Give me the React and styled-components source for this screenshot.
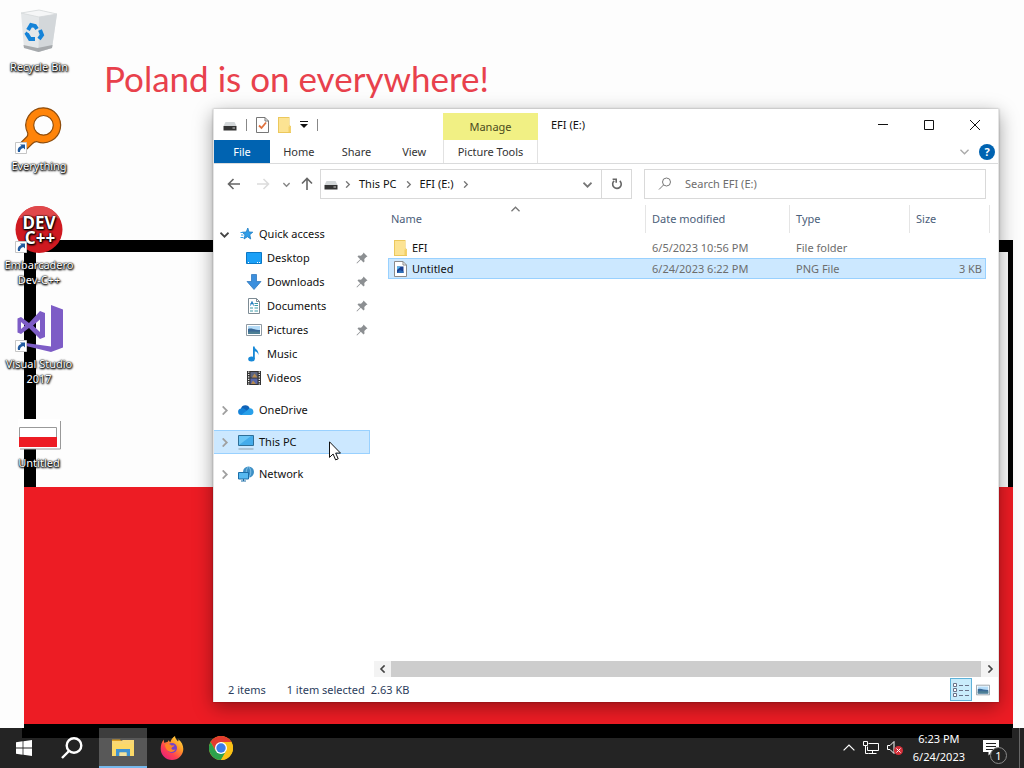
import styled, { createGlobalStyle, css } from 'styled-components';
import { useState } from 'react';

const places = [
  { name: 'Desktop', icon: <DesktopIcon />, pinned: true },
  { name: 'Downloads', icon: <DownloadsIcon />, pinned: true },
  { name: 'Documents', icon: <DocumentsIcon />, pinned: true },
  { name: 'Pictures', icon: <PicturesIcon />, pinned: true },
  { name: 'Music', icon: <MusicIcon /> },
  { name: 'Videos', icon: <VideosIcon /> },
];

const roots = [
  { name: 'OneDrive', icon: <OneDriveIcon /> },
  { name: 'This PC', icon: <ThisPcIcon /> },
  { name: 'Network', icon: <NetworkIcon /> },
];

const files = [
  { name: 'EFI', icon: <FolderIcon />, date: '6/5/2023 10:56 PM', type: 'File folder', size: '' },
  { name: 'Untitled', icon: <ImageFileIcon />, date: '6/24/2023 6:22 PM', type: 'PNG File', size: '3 KB' },
];

const shortcuts = [
  { name: 'Recycle Bin', icon: <RecycleBinIcon /> },
  { name: 'Everything', icon: <EverythingIcon /> },
  { name: 'Embarcadero Dev-C++', icon: <DevCppIcon /> },
  { name: 'Visual Studio 2017', icon: <VisualStudioIcon /> },
  { name: 'Untitled', icon: <FlagFileIcon /> },
];

export default function App() {
  return (
    <>
      <GlobalStyle />
      <Desktop>
        <Flag />
        <Slogan>Poland is on everywhere!</Slogan>
        <Shortcuts>
          {shortcuts.map(item => (
            <Shortcut key={item.name}>
              <span className="picture">{item.icon}</span>
              <span>{item.name}</span>
            </Shortcut>
          ))}
        </Shortcuts>
        <Explorer />
        <Taskbar />
        <Cursor viewBox="0 0 12 20" aria-hidden="true">
          <path d="M.5 .8v15.6l3.6-3.4 2.5 5.9 2.6-1.1-2.5-5.7h4.8z" fill="#fff" stroke="#111" />
        </Cursor>
      </Desktop>
    </>
  );
}

function Explorer() {
  const [place, setPlace] = useState('This PC');
  const [file, setFile] = useState('Untitled');
  const [search, setSearch] = useState('');

  return (
    <Window>
      <TitleBar>
        <QuickTools>
          <DriveIcon />
          <i />
          <button aria-label="Properties">
            <PropertiesIcon />
          </button>
          <button aria-label="New folder">
            <FolderIcon />
          </button>
          <button aria-label="Customize toolbar">
            <svg width="8" height="8" viewBox="0 0 8 8">
              <path d="M0 .5h8" stroke="#111" />
              <path d="M0 3h8L4 7z" fill="#111" />
            </svg>
          </button>
          <i />
        </QuickTools>
        <ContextTitle>Manage</ContextTitle>
        <WindowTitle>EFI (E:)</WindowTitle>
        <WindowButton aria-label="Minimize">
          <svg width="10" height="10" viewBox="0 0 10 10">
            <path d="M0 4.500h10" />
          </svg>
        </WindowButton>
        <WindowButton aria-label="Maximize">
          <svg width="10" height="10" viewBox="0 0 10 10">
            <path d="M.5 .5h9v9h-9z" />
          </svg>
        </WindowButton>
        <WindowButton aria-label="Close">
          <svg width="10" height="10" viewBox="0 0 10 10">
            <path d="M0 0l10 10M10 0L0 10" />
          </svg>
        </WindowButton>
      </TitleBar>

      <Ribbon>
        <Tabs>
          <Tab $file>File</Tab>
          <Tab>Home</Tab>
          <Tab>Share</Tab>
          <Tab>View</Tab>
        </Tabs>
        <ContextTab>Picture Tools</ContextTab>
        <RibbonEnd>
          <button aria-label="Expand ribbon">
            <Chevron dir="down" color="#aaa" size={9} />
          </button>
          <HelpButton aria-label="Help">?</HelpButton>
        </RibbonEnd>
      </Ribbon>

      <NavBar>
        <NavButton $width={28} aria-label="Back">
          <Arrow />
        </NavButton>
        <NavButton $width={30} aria-label="Forward" disabled>
          <Arrow turn={180} color="#dcdcdc" />
        </NavButton>
        <NavButton $width={16} aria-label="Recent locations">
          <Chevron dir="down" color="#888" size={7} bold />
        </NavButton>
        <NavButton $width={26} aria-label="Up">
          <Arrow turn={90} />
        </NavButton>
        <Address>
          <DriveIcon />
          <Chevron color="#777" size={7} bold />
          <button>This PC</button>
          <Chevron color="#777" size={7} bold />
          <button>EFI (E:)</button>
          <Chevron color="#777" size={7} bold />
          <button className="history" aria-label="Previous locations">
            <Chevron dir="down" color="#777" size={9} bold />
          </button>
          <button className="refresh" aria-label="Refresh">
            <svg width="12" height="12" viewBox="0 0 12 12" fill="none" stroke="#666" strokeWidth="1.6">
              <path d="M3.2 2.8A4.3 4.3 0 1 0 8.8 2.9" />
              <path d="M1.6 1.2h3.6v3.6" />
            </svg>
          </button>
        </Address>
        <SearchBox>
          <svg width="14" height="14" viewBox="0 0 14 14" fill="none" stroke="#777">
            <circle cx="8.5" cy="5" r="4" />
            <path d="M5.5 8L1 12.5" />
          </svg>
          <input
            aria-label="Search EFI (E:)"
            placeholder="Search EFI (E:)"
            value={search}
            onChange={e => setSearch(e.target.value)}
          />
        </SearchBox>
      </NavBar>

      <Body>
        <Tree>
          <TreeRow>
            <span className="toggle">
              <Chevron dir="down" color="#444" size={9} bold />
            </span>
            <StarIcon />
            <span>Quick access</span>
          </TreeRow>
          {places.map(item => (
            <TreeRow key={item.name} $child $active={place === item.name} onClick={() => setPlace(item.name)}>
              {item.icon}
              <span>{item.name}</span>
              {item.pinned && <PinIcon />}
            </TreeRow>
          ))}
          {roots.map(item => (
            <TreeRow key={item.name} $root $active={place === item.name} onClick={() => setPlace(item.name)}>
              <span className="toggle">
                <Chevron color="#a0a0a0" size={9} bold />
              </span>
              {item.icon}
              <span>{item.name}</span>
            </TreeRow>
          ))}
        </Tree>

        <Content>
          <FileTable>
            <colgroup>
              <col />
              <col width="144" />
              <col width="120" />
              <col width="76" />
              <col width="4" />
            </colgroup>
            <thead>
              <tr>
                <th>
                  Name
                  <SortMark>
                    <Chevron dir="up" color="#777" size={9} />
                  </SortMark>
                </th>
                <th>Date modified</th>
                <th>Type</th>
                <th className="open">Size</th>
                <td />
              </tr>
            </thead>
            <tbody>
              {files.map(item => (
                <FileRow key={item.name} $active={file === item.name} onClick={() => setFile(item.name)}>
                  <td>
                    <FileName>
                      {item.icon}
                      {item.name}
                    </FileName>
                  </td>
                  <td>{item.date}</td>
                  <td>{item.type}</td>
                  <td className="size">{item.size}</td>
                </FileRow>
              ))}
            </tbody>
          </FileTable>
          <ScrollBar>
            <button aria-label="Scroll left">
              <Chevron dir="left" color="#444" size={8} bold />
            </button>
            <div />
            <button aria-label="Scroll right">
              <Chevron color="#444" size={8} bold />
            </button>
          </ScrollBar>
        </Content>
      </Body>

      <StatusBar>
        <span>2 items</span>
        <span>1 item selected</span>
        <span className="bytes">2.63 KB</span>
        <ViewButton $active aria-label="Details view">
          <svg width="16" height="14" viewBox="0 0 16 14" fill="none" stroke="#6a7288">
            <path d="M.5 .5h3v3h-3zM.5 5.500h3v3h-3zM.5 10.500h3v3h-3z" fill="#fff" />
            <path d="M6 2.500h4M12 2.500h4M6 7.500h4M12 7.500h4M6 12.500h4M12 12.500h4" />
          </svg>
        </ViewButton>
        <ViewButton aria-label="Large icons view">
          <PicturesIcon width={14} />
        </ViewButton>
      </StatusBar>
    </Window>
  );
}

function Taskbar() {
  return (
    <TaskBar>
      <TaskButton aria-label="Start">
        <svg width="16" height="16" viewBox="0 0 16 16" fill="#fff">
          <path d="M0 2.2l6.6-.9v6.2H0zM7.4 1.2L16 0v7.5H7.4zM0 8.4h6.6v6.3L0 13.8zM7.4 8.4H16V16l-8.6-1.2z" />
        </svg>
      </TaskButton>
      <TaskButton aria-label="Search">
        <svg width="22" height="22" viewBox="0 0 22 22" fill="none" stroke="#fff" strokeWidth="2.4">
          <circle cx="13" cy="8.5" r="7.3" />
          <path d="M8 14l-7 7" />
        </svg>
      </TaskButton>
      <Apps>
        <TaskButton $active aria-label="File Explorer">
          <svg width="22" height="20" viewBox="0 0 22 20">
            <path d="M0 1.500h8l2 2H0z" fill="#d99b1c" />
            <path d="M0 3h9l2-1h11v16H0z" fill="#f8d775" />
            <path d="M0 6h22v12H0z" fill="#fbd968" />
            <path d="M4 11h14v7h-3.500v-3.500h-7V18H4z" fill="#3f93d2" />
            <path d="M7.500 14.500h7V18h-7z" fill="#f3e3a0" />
          </svg>
        </TaskButton>
        <TaskButton aria-label="Firefox">
          <FirefoxIcon />
        </TaskButton>
        <TaskButton aria-label="Chrome">
          <ChromeIcon />
        </TaskButton>
      </Apps>
      <Tray>
        <button aria-label="Show hidden icons">
          <Chevron dir="up" color="#fff" size={12} thin />
        </button>
        <button aria-label="Network">
          <svg width="16" height="14" viewBox="0 0 16 14" fill="none" stroke="#fff">
            <path d="M5.500 2.500h10v7h-11v-4M9.500 9.500v3M5.500 12.500h8" />
            <path d="M.5 .5h4v4h-4zM2.500 4.500v8h3" />
          </svg>
        </button>
        <button aria-label="Volume">
          <svg width="16" height="14" viewBox="0 0 16 14">
            <path d="M.5 4.500h2.500l4-4v12l-4-4H.5z" fill="none" stroke="#fff" />
            <circle cx="11.500" cy="9.500" r="4.500" fill="#d5303a" />
            <path d="M9.500 7.500l4 4M13.500 7.500l-4 4" stroke="#fff" />
          </svg>
        </button>
        <Clock>
          <span>6:23 PM</span>
          <span>6/24/2023</span>
        </Clock>
        <Notifications aria-label="Notifications, 1 new">
          <svg width="16" height="16" viewBox="0 0 16 16">
            <path d="M0 0h16v12H9l-3.500 3.500V12H0z" fill="#fff" />
            <path d="M3 3.500h10M3 6.500h10M3 9.500h7" stroke="#222" />
          </svg>
          <span>1</span>
        </Notifications>
        <ShowDesktop aria-label="Show desktop" />
      </Tray>
    </TaskBar>
  );
}

function Chevron({ dir = 'right', color, size, bold, thin }) {
  const turns = { right: 0, down: 90, left: 180, up: 270 };
  const weight = bold ? 2 : thin ? 1 : 1.5;
  return (
    <svg width={size} height={size} viewBox="0 0 10 10" fill="none" stroke={color} strokeWidth={weight}>
      <path d="M3 .5L7.500 5 3 9.500" transform={`rotate(${turns[dir]} 5 5)`} />
    </svg>
  );
}

function Arrow({ turn = 0, color = '#666' }) {
  return (
    <svg width="14" height="14" viewBox="0 0 14 14" fill="none" stroke={color} strokeWidth="1.6">
      <path d="M13 7H1.500M6.500 2l-5 5 5 5" transform={`rotate(${turn} 7 7)`} />
    </svg>
  );
}

function DriveIcon() {
  return (
    <svg width="14" height="16" viewBox="0 0 14 16">
      <path d="M2.500 5h9L13.500 9H.5z" fill="#d2d6d8" />
      <path d="M.5 9h13v4.500H.5z" fill="#333" />
      <path d="M9.500 11h2.500" stroke="#ccc" />
    </svg>
  );
}

function PropertiesIcon() {
  return (
    <svg width="13" height="16" viewBox="0 0 13 16">
      <path d="M.5 .5h8.500l3.500 3.500v11.500H.5z" fill="#fff" stroke="#777" />
      <path d="M9 .5V4h3.500" fill="none" stroke="#777" />
      <path d="M3 8.500l2.500 2.500L10 5.500" fill="none" stroke="#e0703c" strokeWidth="1.800" />
    </svg>
  );
}

function FolderIcon() {
  return (
    <svg width="13" height="16" viewBox="0 0 13 16">
      <path d="M0 0h11.500v8.500L13 9v7H0z" fill="#ecc85c" />
      <path d="M1 1h10v8l1.500.5v5.500H1z" fill="#fce393" />
      <path d="M10.500 9.500h2v5.500h-2z" fill="#f3cf66" />
    </svg>
  );
}

function ImageFileIcon() {
  return (
    <svg width="13" height="16" viewBox="0 0 13 16">
      <path d="M.5 .5H9L12.500 4v11.500H.5z" fill="#fff" stroke="#8a8a8a" />
      <path d="M9 .5V4h3.500" fill="none" stroke="#8a8a8a" />
      <path d="M3 5.500h6.500V12H3z" fill="#1b3f90" />
      <path d="M3 5.500h4L3 9z" fill="#58b5ea" />
      <path d="M3 12l3-3 3.500 1.500V12z" fill="#2d6fb8" />
    </svg>
  );
}

function StarIcon() {
  return (
    <svg width="16" height="16" viewBox="0 0 16 16">
      <path
        d="M9.800 2l1.200 4 3.800.2-3 2.500.9 4.300-3.300-2.300L6 13l1-4.200L4.200 6.200l4-.2z"
        fill="#2f9de8"
        stroke="#1c7cc4"
        strokeWidth=".8"
      />
      <path d="M2.500 6.500h2.500M3 9h2.500M2.500 11.500h3" stroke="#2f9de8" />
    </svg>
  );
}

function DesktopIcon() {
  return (
    <svg width="16" height="16" viewBox="0 0 16 16">
      <path d="M.5 2.500h15v11H.5z" fill="#1ba0f7" stroke="#0b77c5" />
      <path d="M2 12.500h1M11 12.500h1M13 12.500h1" stroke="#fff" />
    </svg>
  );
}

function DownloadsIcon() {
  return (
    <svg width="16" height="16" viewBox="0 0 16 16">
      <path d="M5.500 .5h5v7h4.500L8 15.500 1 7.500h4.500z" fill="#3c8fdd" stroke="#2470b8" strokeWidth=".7" />
    </svg>
  );
}

function DocumentsIcon() {
  return (
    <svg width="16" height="16" viewBox="0 0 16 16">
      <path d="M2.500 .5h8l3 3v12h-11z" fill="#fff" stroke="#7d8b94" />
      <path d="M10.500 .5v3h3" fill="none" stroke="#7d8b94" />
      <path d="M8.500 5.500h3.500M8.500 7.500h3.500M4 10h3M8.500 10h3.500M4 13h3M8.500 13h3.500" stroke="#3d9ba8" />
      <path d="M4.500 7.500L6 3.500l1.500 4M4.500 5.500h3" stroke="#277fc0" fill="none" />
    </svg>
  );
}

function PicturesIcon({ width = 16 }) {
  return (
    <svg width={width} height={width} viewBox="0 0 16 16">
      <path d="M.5 2.500h15v11H.5z" fill="#fff" stroke="#8f9aa3" />
      <path d="M2 4h12v8H2z" fill="#b5dcf8" />
      <path d="M2 7c4-1.500 6 1 12 1v4H2z" fill="#3a6896" />
      <path d="M2 10c4-1 8 0 12-.5V12H2z" fill="#4d7f94" />
    </svg>
  );
}

function MusicIcon() {
  return (
    <svg width="16" height="16" viewBox="0 0 16 16" fill="#1789d8">
      <ellipse cx="5.500" cy="13" rx="3.300" ry="2.500" />
      <path d="M7 .5h1.600c0 3 4.900 3.500 3.600 8.500-.2-2-1.400-3.300-3.400-3.700V13H7z" />
    </svg>
  );
}

function VideosIcon() {
  return (
    <svg width="16" height="16" viewBox="0 0 16 16">
      <path d="M1 1h14v14H1z" fill="#333" />
      <path d="M4.500 2h7v5.500h-7z" fill="#5c6580" />
      <path d="M4.500 8.500h7V14h-7z" fill="#5967a8" />
      <path d="M6 7.500l2.500-4 3 4zM5 14l2-3.500 3 3.500z" fill="#b58a50" />
      <path d="M2.700 1.500v13M13.300 1.500v13" stroke="#fff" strokeWidth="1.200" strokeDasharray="1.200 1.200" />
    </svg>
  );
}

function OneDriveIcon() {
  return (
    <svg width="16" height="16" viewBox="0 0 16 16">
      <path d="M3 6.500a4.600 4.600 0 0 1 8.700-.2L9 11H3z" fill="#0f63b8" />
      <path d="M3.500 13A3.300 3.300 0 0 1 3.300 6.400c1.500-.2 3 .3 4 1.100L12 11l-1 2z" fill="#1482d8" />
      <path d="M3 13l6-4.500 2.500-2.300A3.500 3.500 0 0 1 13 13z" fill="#28a0ea" />
    </svg>
  );
}

function ThisPcIcon() {
  return (
    <svg width="16" height="16" viewBox="0 0 16 16">
      <path d="M.5 1.500h15v10H.5z" fill="#6cc6f6" stroke="#2f6f98" />
      <path d="M1 11L13 2h2v9z" fill="#45aceb" />
      <path d="M.5 15h15" stroke="#8d9fac" />
    </svg>
  );
}

function NetworkIcon() {
  return (
    <svg width="16" height="16" viewBox="0 0 16 16">
      <circle cx="10.500" cy="6" r="5.500" fill="#3d8fc5" />
      <path d="M10.500 .5c-3 3-3 8 0 11M10.500 .5c3 3 3 8 0 11" stroke="#9fd6f5" strokeWidth=".7" fill="none" />
      <path d="M.5 6.500h10v6.500h-10z" fill="#57b9f0" stroke="#1c6ea8" />
      <path d="M3 15h5M5.500 13v2" stroke="#1c6ea8" />
    </svg>
  );
}

function PinIcon() {
  return (
    <svg className="pin" width="12" height="12" viewBox="0 0 12 12" fill="#8c8f92">
      <path d="M7.500 .5l4 4-1.200.5-2 2 .2 2.500-1 1-2.700-2.700L1 11.500.5 11l3.700-3.800L1.500 4.500l1-1L5 3.700l2-2z" />
    </svg>
  );
}

function ShortcutArrow() {
  return (
    <g>
      <path d="M.5 35.500h11v11H.5z" fill="#fff" stroke="#c5c5c5" />
      <path d="M3 45c-.8-3.500.8-5.500 3.500-6L5 37.500h5v5L8.500 41C6 41.500 5 43 5 45z" fill="#205a9f" />
    </g>
  );
}

function RecycleBinIcon() {
  return (
    <svg width="48" height="48" viewBox="0 0 48 48">
      <path d="M6 5l18-3 18 4-5 34-14 4-14-4z" fill="#e4e7e9" />
      <path d="M6 5l18-3 18 4-18 3z" fill="#f5f6f7" stroke="#d5d9db" strokeWidth=".8" />
      <path d="M24 9l18-3-5 34-13.500 4z" fill="#d3d7da" />
      <path d="M8.500 37l14 3 15-3-.5 3-13.500 4L9 40z" fill="#a6a9ac" />
      <g fill="none" stroke="#1583d8" strokeWidth="4">
        <path d="M13 22l3-5 4 1 2 3" />
        <path d="M25 22l2 5-3 4" />
        <path d="M20 31h-5l-3-5 1-1" />
      </g>
    </svg>
  );
}

function EverythingIcon() {
  return (
    <svg width="48" height="48" viewBox="0 0 48 48">
      <path
        d="M28.500 .8a17.500 17.500 0 0 0-15.700 25.500c.3 1.700-.3 2.700-1.500 4L6 35.500 12 42l5.500-5.500c1.500-1.500 2.500-2 4.500-1.800A17.500 17.500 0 1 0 28.500 .8zm0 7.700a9.800 9.800 0 1 1 0 19.600 9.800 9.800 0 0 1 0-19.600z"
        fill="#ff8409"
        stroke="#8d4c0c"
        strokeWidth="1.200"
      />
      <ShortcutArrow />
    </svg>
  );
}

function DevCppIcon() {
  return (
    <svg width="48" height="48" viewBox="0 0 48 48">
      <circle cx="24" cy="23.500" r="23.500" fill="#cf1920" />
      <path d="M3 13a23.500 23.500 0 0 1 42 0c-10-4-32-4-42 0z" fill="#e0484b" />
      <text fill="#fff" fontFamily="'Noto Sans', sans-serif" fontWeight="700" fontSize="17" textAnchor="middle">
        <tspan x="24" y="23">
          DEV
        </tspan>
        <tspan x="25" y="38">
          C++
        </tspan>
      </text>
      <ShortcutArrow />
    </svg>
  );
}

function VisualStudioIcon() {
  return (
    <svg width="48" height="48" viewBox="0 0 48 48" fill="#7d5cc6">
      <path d="M36 0l12 4.500v38L36 47 11 41v-3l25 3.500z" />
      <path
        d="M2.500 13.500L6 12l8 6L25 6l5 2v24l-5 2-11-11-8 6-3.500-1.500zM6 17v7l4-3.500zM18 20.500l7 6.500V14.500z"
        fillRule="evenodd"
      />
      <ShortcutArrow />
    </svg>
  );
}

function FlagFileIcon() {
  return (
    <svg width="44" height="48" viewBox="0 0 44 48">
      <path d="M1 15h42v30H1z" fill="#fff" />
      <path d="M43.500 17v28H3" fill="none" stroke="#999" />
      <path d="M2.500 23.500h37v10h-37z" fill="#fff" stroke="#999" />
      <path d="M2 33h38v10H2z" fill="#ed1c24" />
    </svg>
  );
}

function FirefoxIcon() {
  return (
    <svg width="24" height="24" viewBox="0 0 24 24">
      <defs>
        <linearGradient id="fox" x1="1" y1="0" x2="0.200" y2="1">
          <stop offset="0" stopColor="#fff04a" />
          <stop offset=".4" stopColor="#ff9a27" />
          <stop offset=".7" stopColor="#ff4050" />
          <stop offset="1" stopColor="#e3207c" />
        </linearGradient>
      </defs>
      <path
        d="M4 3.500c-.2 1.500 0 2.500.5 3.500.8-.7 2-1 3-1L9 4c0 1 .3 1.800 1.300 2.300C11 4 12.500 1.500 15 0c.2 2.500 1.700 3.700 3 5.500.5-.5.500-1.500.3-2.300C21.500 5.500 23.300 9 23.300 13A11.300 11 0 0 1 .7 13c0-3.800.8-6.800 3.300-9.500z"
        fill="url(#fox)"
      />
      <circle cx="12" cy="12" r="5" fill="#7542c9" />
      <path
        d="M5 8.500c2-1.500 5-.5 6.500 1l3-.2c-.5 1.700-2.500 1.700-3 2.700-.4 1.500 2 2.500 4 1.300-1 3-6.500 4-9 0-1-1.500-1.500-3-1.500-4.800z"
        fill="#ff8426"
      />
    </svg>
  );
}

function ChromeIcon() {
  return (
    <svg width="24" height="24" viewBox="0 0 24 24">
      <circle cx="12" cy="12" r="12" fill="#fbc116" />
      <path d="M1.600 6A12 12 0 0 1 22.400 6H12L6.800 15z" fill="#e33b2e" />
      <path d="M1.600 6A12 12 0 0 0 12 24l5.200-9H6.800z" fill="#2da24c" />
      <path d="M12 6h10.400A12 12 0 0 1 12 24l5.200-9z" fill="#fbc116" />
      <circle cx="12" cy="12" r="6" fill="#fff" />
      <circle cx="12" cy="12" r="4.700" fill="#3c7de8" />
    </svg>
  );
}

const GlobalStyle = createGlobalStyle`
  * {
    box-sizing: border-box;
  }

  body {
    margin: 0;
    font-family: 'Noto Sans', 'Open Sans', sans-serif;
    font-size: 11px;
    line-height: 16px;
    color: #111;
  }

  button {
    display: inline-flex;
    align-items: center;
    justify-content: center;
    padding: 0;
    border: 0;
    background: none;
    color: inherit;
    font: inherit;
    white-space: nowrap;
  }

  svg {
    display: block;
    flex-shrink: 0;
  }
`;

const Desktop = styled.main`
  position: relative;
  display: flex;
  flex-direction: column;
  height: 100vh;
  overflow: hidden;
  background: #fdfdfd;
`;

const Flag = styled.div`
  position: absolute;
  inset: 240px 11px 30px 24px;
  border: solid #000;
  border-width: 12px 5px 14px 12px;

  &::after {
    content: '';
    position: absolute;
    inset: 235px -5px 0 -12px;
    background: #ed1c24;
  }
`;

const Slogan = styled.p`
  position: absolute;
  top: 58px;
  left: 104px;
  margin: 0;
  color: #e8414c;
  font-family: Lato, 'Noto Sans', sans-serif;
  font-size: 35px;
  line-height: 40px;
  white-space: nowrap;
`;

const Shortcuts = styled.div`
  position: relative;
  flex: 1;
  display: grid;
  grid-template-columns: 78px;
  grid-auto-rows: 99px;
  align-content: start;
`;

const Shortcut = styled.button`
  && {
    flex-direction: column;
    justify-content: flex-start;
    padding-top: 8px;
    color: #fff;
    line-height: 15px;
    white-space: normal;
    text-shadow: 0 0 1px #000, 0 0 2px #000, 1px 1px 2px #000, 0 1px 2px #000;
  }

  .picture {
    margin-bottom: 3px;
  }
`;

const Cursor = styled.svg`
  position: absolute;
  top: 441px;
  left: 329px;
  width: 12px;
  height: 20px;
`;

const Window = styled.section`
  position: absolute;
  inset: 109px 25px 66px 213px;
  display: flex;
  flex-direction: column;
  border-left: 1px solid #e4e4e4;
  border-right: 1px solid #e4e4e4;
  background: #fff;
  box-shadow: 0 0 2px rgba(0, 0, 0, 0.3), 0 5px 18px rgba(0, 0, 0, 0.38);
`;

const TitleBar = styled.header`
  display: flex;
  height: 31px;
`;

const QuickTools = styled.div`
  display: flex;
  align-items: center;
  gap: 9px;
  width: 229px;
  padding-left: 9px;

  i {
    width: 1px;
    height: 12px;
    background: #888;
  }
`;

const ContextTitle = styled.div`
  width: 95px;
  margin-top: 4px;
  background: #f1f084;
  color: #4a4a20;
  line-height: 28px;
  text-align: center;
`;

const WindowTitle = styled.div`
  flex: 1;
  padding-left: 13px;
  line-height: 32px;
`;

const WindowButton = styled.button`
  width: 46px;

  svg {
    fill: none;
    stroke: #111;
  }
`;

const Ribbon = styled.nav`
  display: flex;
  height: 24px;
  border-bottom: 1px solid #dadbdc;
  color: #333;
`;

const Tabs = styled.div`
  display: flex;
  width: 229px;
`;

const Tab = styled.button`
  flex: 1;

  ${props =>
    props.$file &&
    css`
      && {
        flex: 0 0 56px;
        background: #0063b1;
        color: #fff;
      }
    `}
`;

const ContextTab = styled.button`
  && {
    width: 95px;
    border: solid #e2e2e2;
    border-width: 0 1px;
  }
`;

const RibbonEnd = styled.div`
  display: flex;
  align-items: center;
  gap: 10px;
  margin-left: auto;
  padding-right: 3px;
`;

const HelpButton = styled.button`
  && {
    width: 16px;
    height: 16px;
    border-radius: 50%;
    background: #0063b1;
    color: #fff;
    font-weight: 700;
  }
`;

const NavBar = styled.div`
  display: flex;
  height: 41px;
  padding: 5px 12px 6px 6px;
`;

const NavButton = styled.button`
  width: ${props => props.$width}px;
`;

const Address = styled.div`
  flex: 1;
  display: flex;
  align-items: center;
  gap: 6px;
  padding-left: 3px;
  border: 1px solid #d9d9d9;

  button {
    padding: 0 2px;
  }

  .history {
    width: 28px;
    margin-left: auto;
  }

  .refresh {
    align-self: stretch;
    width: 30px;
    margin-left: -6px;
    border-left: 1px solid #d9d9d9;
  }
`;

const SearchBox = styled.label`
  display: flex;
  align-items: center;
  gap: 13px;
  width: 342px;
  margin-left: 12px;
  padding-left: 13px;
  border: 1px solid #d9d9d9;

  input {
    flex: 1;
    min-width: 0;
    padding: 0;
    border: 0;
    outline: 0;
    background: none;
    font: inherit;
  }

  input::placeholder {
    color: #6d6d6d;
  }
`;

const Body = styled.div`
  flex: 1;
  display: flex;
  min-height: 0;
`;

const Tree = styled.nav`
  width: 157px;
  padding-top: 17px;
`;

const TreeRow = styled.button`
  && {
    display: flex;
    justify-content: flex-start;
    gap: 5px;
    width: 156px;
    height: 24px;
    margin-top: ${props => (props.$root ? 8 : 0)}px;
    padding-left: ${props => (props.$child ? 32 : 6)}px;
    border: solid transparent;
    border-width: 1px 1px 1px 0;
  }

  .toggle {
    width: 13px;
  }

  .pin {
    margin-left: auto;
    margin-right: 1px;
  }

  ${props =>
    props.$active &&
    css`
      && {
        border-color: #99d1ff;
        background: #cce8ff;
      }
    `}
`;

const Content = styled.div`
  flex: 1;
  display: flex;
  flex-direction: column;
  justify-content: space-between;
  min-width: 0;
`;

const FileTable = styled.table`
  table-layout: fixed;
  width: calc(100% - 25px);
  margin-left: 17px;
  border-spacing: 0;
  color: #6d6d6d;

  th {
    position: relative;
    height: 28px;
    padding: 0 6px;
    border-right: 1px solid #e5e5e5;
    color: #4c607a;
    font-weight: 400;
    text-align: left;
  }

  th:first-child {
    padding-left: 3px;
  }

  .open {
    border: 0;
  }

  td {
    padding: 0;
  }

  thead td {
    border-right: 1px solid #e5e5e5;
  }

  tbody::before {
    content: '';
    display: block;
    height: 4px;
  }
`;

const SortMark = styled.span`
  position: absolute;
  top: 0;
  left: 50%;
  margin-left: -6px;
`;

const FileRow = styled.tr`
  td {
    height: 21px;
    padding: 0 6px;
    border: solid transparent;
    border-width: 1px 0;
    line-height: 19px;
  }

  td:first-child {
    padding-left: 5px;
    border-left-width: 1px;
  }

  .size {
    padding-right: 3px;
    border-right-width: 1px;
    text-align: right;
  }

  ${props =>
    props.$active &&
    css`
      td {
        border-color: #99d1ff;
        background: #cce8ff;
      }
    `}
`;

const FileName = styled.span`
  display: flex;
  align-items: center;
  gap: 5px;
  color: #111;
`;

const ScrollBar = styled.div`
  display: flex;
  height: 16px;
  margin-left: 3px;
  background: #f3f3f3;

  button {
    width: 17px;
  }

  div {
    flex: 1;
    background: #cdcdcd;
  }
`;

const StatusBar = styled.footer`
  display: flex;
  align-items: center;
  gap: 21px;
  height: 25px;
  padding: 0 4px 0 14px;
  color: #2c3d5c;

  .bytes {
    margin-left: -15px;
    margin-right: auto;
  }
`;

const ViewButton = styled.button`
  && {
    width: 22px;
    height: 23px;
    margin-left: -21px;
    border: 1px solid ${props => (props.$active ? '#5fb2d8' : 'transparent')};
    background: ${props => (props.$active ? '#c9ecfb' : 'none')};
  }
`;

const TaskBar = styled.footer`
  position: relative;
  display: flex;
  height: 40px;
  background: linear-gradient(#000, #000) no-repeat 22px 0 / calc(100% - 34px) 10px, #242424;
  color: #fff;
`;

const Apps = styled.div`
  display: flex;
  gap: 1px;
  margin-left: 3px;
`;

const TaskButton = styled.button`
  && {
    width: 48px;
    background: ${props => (props.$active ? 'rgba(255, 255, 255, 0.24)' : 'none')};
    box-shadow: ${props => (props.$active ? 'inset 0 -2px #76b9ed' : 'none')};
  }
`;

const Tray = styled.div`
  display: flex;
  align-items: center;
  gap: 8px;
  margin-left: auto;
`;

const Clock = styled.time`
  display: flex;
  flex-direction: column;
  align-items: center;
  margin-left: 2px;
  line-height: 18px;
`;

const Notifications = styled.button`
  && {
    position: relative;
    width: 32px;
    margin-left: 2px;
    margin-right: 4px;
  }

  span {
    position: absolute;
    top: 7px;
    left: 15px;
    width: 17px;
    height: 17px;
    border: 1px solid #8a8a8a;
    border-radius: 50%;
    background: #242424;
    line-height: 15px;
  }
`;

const ShowDesktop = styled.button`
  && {
    align-self: stretch;
    width: 5px;
    border-left: 1px solid #666;
  }
`;
